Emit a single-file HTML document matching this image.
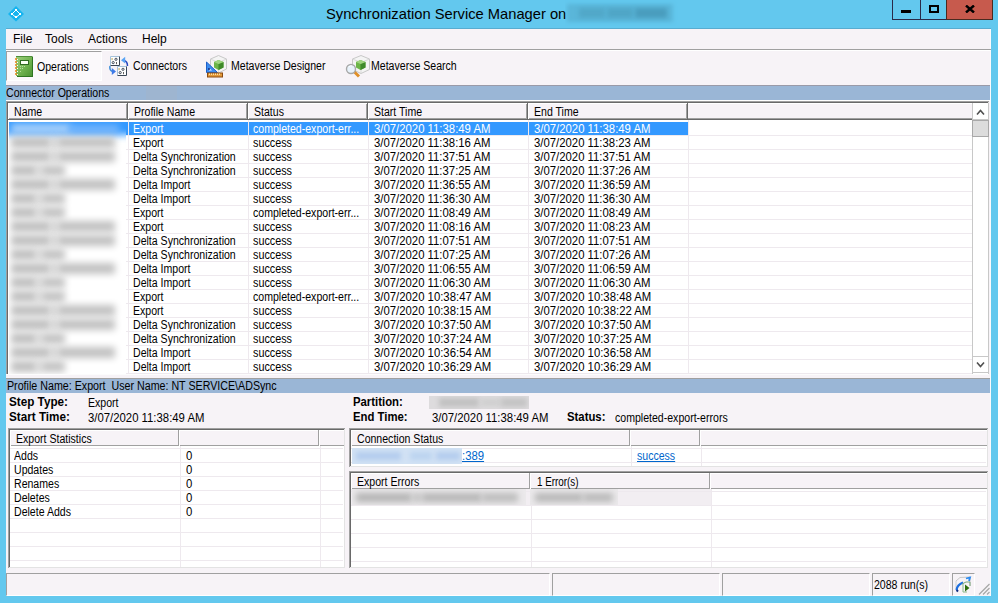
<!DOCTYPE html>
<html><head><meta charset="utf-8">
<style>
*{margin:0;padding:0;box-sizing:border-box}
html,body{width:998px;height:603px;overflow:hidden;background:#63c8ee;font-family:"Liberation Sans",sans-serif;font-size:11px;color:#000}
.a{position:absolute}
.t{position:absolute;white-space:pre;font-size:12px;line-height:14px;transform:scaleX(.88);transform-origin:0 0}
.d{position:absolute;white-space:pre;font-size:12px;line-height:14px;transform:scaleX(.945);transform-origin:0 0}
.w{color:#fff}
.b{font-weight:bold;transform:scaleX(.945)}
.blur{position:absolute;background:#b0b0b0;filter:blur(2.5px);border-radius:3px}
</style></head><body>

<svg class="a" style="left:7px;top:5px" width="18" height="18" viewBox="0 0 18 18">
<path d="M9 1 L17 9 L9 16.5 L1 9 Z" fill="#16b4ef"/>
<path d="M9 5 L13 9 L9 12.5 L5 9 Z" fill="none" stroke="#fff" stroke-width="1"/>
<rect x="8" y="4" width="2" height="2" fill="#fff"/><rect x="4" y="8" width="2" height="2" fill="#fff"/>
<rect x="12" y="8" width="2" height="2" fill="#fff"/><rect x="8" y="11" width="2" height="2" fill="#fff"/>
</svg>
<div class="t" style="left:326px;top:5px;font-size:15px;line-height:18px;color:#000;transform:scaleX(.98)">Synchronization Service Manager on</div>
<div class="a" style="left:892px;top:0px;width:29px;height:20px;background:#63c8ee;border:1px solid #2a2a48;border-top:0"></div>
<div class="a" style="left:920px;top:0px;width:27px;height:20px;background:#63c8ee;border:1px solid #2a2a48;border-top:0"></div>
<div class="a" style="left:946px;top:0px;width:47px;height:20px;background:#c75a4d;border:1px solid #4b2a20;border-top:0"></div>
<div class="a" style="left:901px;top:10px;width:10px;height:3px;background:#000;"></div>
<div class="a" style="left:929px;top:5px;width:10px;height:8px;background:transparent;border:2px solid #000"></div>
<svg class="a" style="left:965px;top:5px" width="10" height="8" viewBox="0 0 10 8"><path d="M1 0.5 L9 7.5 M9 0.5 L1 7.5" stroke="#000" stroke-width="2.4"/></svg>
<div class="a" style="left:6px;top:28px;width:985px;height:1px;background:#58acd0;"></div>
<div class="a" style="left:6px;top:29px;width:985px;height:567px;background:#f7f3f7;"></div>
<div class="a" style="left:990px;top:29px;width:1px;height:567px;background:#fdfbfd;"></div>
<div class="t" style="left:13px;top:32px;transform:none">File</div>
<div class="t" style="left:45px;top:32px;transform:none">Tools</div>
<div class="t" style="left:88px;top:32px;transform:none">Actions</div>
<div class="t" style="left:142px;top:32px;transform:none">Help</div>
<div class="a" style="left:6px;top:49px;width:985px;height:1px;background:#a0a0a0;"></div>
<div class="a" style="left:6px;top:50px;width:985px;height:1px;background:#fff;"></div>
<div class="a" style="left:6px;top:51px;width:96px;height:30px;background:#fbf9fb;border-top:1px solid #a0a0a0;border-left:1px solid #a0a0a0;border-right:1px solid #fff;border-bottom:1px solid #fff"></div>
<div class="t" style="left:37px;top:60px;">Operations</div>
<div class="t" style="left:133px;top:59px;">Connectors</div>
<div class="t" style="left:231px;top:59px;">Metaverse Designer</div>
<div class="t" style="left:371px;top:59px;">Metaverse Search</div>
<svg class="a" style="left:13px;top:54px" width="22" height="24" viewBox="0 0 22 24">
<defs><linearGradient id="nbg" x1="0" y1="0" x2="1" y2="1"><stop offset="0" stop-color="#9fd07e"/><stop offset="0.6" stop-color="#6cb04c"/><stop offset="1" stop-color="#4d9434"/></linearGradient></defs>
<rect x="4" y="2.5" width="16" height="20.5" fill="#2f7522"/>
<rect x="3" y="2" width="16" height="20" fill="url(#nbg)"/>
<rect x="3" y="2" width="16" height="1" fill="#4f8f3a"/>
<rect x="7.5" y="6.5" width="8" height="4" fill="#fbfff4" stroke="#2e6a20" stroke-width="1"/>
<g fill="#b5e09a"><rect x="7" y="12" width="1" height="1"/><rect x="9" y="12" width="1" height="1"/><rect x="11" y="12" width="1" height="1"/><rect x="7" y="14" width="1" height="1"/><rect x="9" y="14" width="1" height="1"/><rect x="7" y="17" width="1" height="1"/></g>
<g fill="#e58b22"><circle cx="3" cy="5" r="1.1"/><circle cx="3" cy="8" r="1.1"/><circle cx="3" cy="11" r="1.1"/><circle cx="3" cy="14" r="1.1"/><circle cx="3" cy="17" r="1.1"/><circle cx="3" cy="20" r="1.1"/></g>
<g fill="#fff"><rect x="4" y="5" width="1" height="1"/><rect x="4" y="8" width="1" height="1"/><rect x="4" y="11" width="1" height="1"/><rect x="4" y="14" width="1" height="1"/><rect x="4" y="17" width="1" height="1"/><rect x="4" y="20" width="1" height="1"/></g>
</svg>
<svg class="a" style="left:107px;top:54px" width="24" height="24" viewBox="0 0 24 24">
<rect x="3" y="2" width="10" height="10" fill="#fff"/>
<path d="M3.5 11.5 V2.5 H12.5" fill="none" stroke="#a6c2da" stroke-width="1"/>
<path d="M12.5 2.5 V11.5 H3.5" fill="none" stroke="#3a4656" stroke-width="1"/>
<g fill="none" stroke="#1e2838" stroke-width="0.8"><circle cx="9" cy="5.3" r="1.1"/><circle cx="6.2" cy="8.6" r="1.1"/></g>
<rect x="4.6" y="4" width="0.9" height="2.2" fill="#b89a40"/><rect x="9.1" y="8" width="0.9" height="2.2" fill="#505050"/>
<rect x="10" y="12" width="10" height="10" fill="#fff"/>
<path d="M10.5 21.5 V12.5 H19.5" fill="none" stroke="#a6c2da" stroke-width="1"/>
<path d="M19.5 12.5 V21.5 H10.5" fill="none" stroke="#3a4656" stroke-width="1"/>
<g fill="none" stroke="#1e2838" stroke-width="0.8"><circle cx="16" cy="15.3" r="1.1"/><circle cx="13.2" cy="18.6" r="1.1"/></g>
<rect x="11.6" y="14" width="0.9" height="2.2" fill="#b89a40"/><rect x="16.1" y="18" width="0.9" height="2.2" fill="#505050"/>
<path d="M17 6.5 C19.5 7 20.5 9 20.5 12" fill="none" stroke="#2848c0" stroke-width="1.5"/>
<path d="M14 6.2 L18.2 2.8 L18.2 9.6 Z" fill="#5aa4f4"/>
<path d="M3 12 C2.5 14.5 3.5 17 6 17.5" fill="none" stroke="#3a8ad8" stroke-width="1.5"/>
<path d="M9 17.6 L4.8 14 L4.8 21 Z" fill="#3f7ae8"/>
</svg>
<svg class="a" style="left:204px;top:53px" width="26" height="26" viewBox="0 0 26 26">
<path d="M14.5 2.5 L22.5 6 L22.5 16 L14.5 20 L6.5 16 L6.5 6 Z" fill="#f4f4f4" stroke="#c8c8c8" stroke-width="1"/>
<path d="M6.5 6 L14.5 9.5 L22.5 6 M14.5 9.5 V20" fill="none" stroke="#d4d4d4" stroke-width="0.8"/>
<path d="M14.5 7 L19.5 9 L19.5 14.5 L14.5 17 L10 14.5 L10 9 Z" fill="#6cb548"/>
<path d="M14.5 11 L19.5 9 L19.5 14.5 L14.5 17 Z" fill="#3f8a2a"/>
<path d="M10 9 L14.5 7 L19.5 9 L14.5 11 Z" fill="#9fd480"/>
<path d="M2.5 9 L13.5 19.5 L2.5 19.5 Z" fill="#3c8cf0" stroke="#1d5fc8" stroke-width="1"/>
<path d="M5 15 L8 17.5 L5 17.5 Z" fill="#e8f0ff"/>
<circle cx="5" cy="16" r="1" fill="#0a2a80"/>
<rect x="3.5" y="20" width="15" height="4" fill="#e39a3a" stroke="#8a4a10" stroke-width="1"/>
<path d="M5.5 20.5 V22 M7.5 20.5 V22 M9.5 20.5 V22 M11.5 20.5 V22 M13.5 20.5 V22 M15.5 20.5 V22" stroke="#fde0a8" stroke-width="1"/>
</svg>
<svg class="a" style="left:344px;top:53px" width="28" height="26" viewBox="0 0 28 26">
<path d="M17 2.5 L25.5 6 L25.5 16.5 L17 20.5 L8.5 16.5 L8.5 6 Z" fill="#f4f4f4" stroke="#c8c8c8" stroke-width="1"/>
<path d="M8.5 6 L17 9.5 L25.5 6 M17 9.5 V20.5" fill="none" stroke="#d4d4d4" stroke-width="0.8"/>
<path d="M16.5 7 L21.5 9 L21.5 14.5 L16.5 17 L12 14.5 L12 9 Z" fill="#6cb548"/>
<path d="M16.5 11 L21.5 9 L21.5 14.5 L16.5 17 Z" fill="#3f8a2a"/>
<path d="M12 9 L16.5 7 L21.5 9 L16.5 11 Z" fill="#9fd480"/>
<path d="M10 18.5 L15 23.5" stroke="#e0902a" stroke-width="3"/>
<circle cx="7" cy="16" r="4.5" fill="#e8f2fb" stroke="#a8a8a8" stroke-width="1.4"/>
<path d="M5 14 A2.5 2.5 0 0 1 8 13" fill="none" stroke="#fff" stroke-width="1"/>
</svg>
<div class="a" style="left:6px;top:85px;width:984px;height:1px;background:#9a9aa8;"></div>
<div class="a" style="left:6px;top:86px;width:984px;height:14px;background:#9ab6d6;"></div>
<div class="a" style="left:6px;top:100px;width:984px;height:1px;background:#fff;"></div>
<div class="a" style="left:146px;top:86px;width:31px;height:14px;background:#9eb5d0;"></div>
<div class="t" style="left:6px;top:86px;">Connector Operations</div>
<div class="a" style="left:6px;top:101px;width:983px;height:273px;background:#fff;"></div>
<div class="a" style="left:6px;top:374px;width:983px;height:1px;background:#fcfcfc;"></div>
<div class="a" style="left:6px;top:101px;width:983px;height:1px;background:#a0a0a0;"></div>
<div class="a" style="left:6px;top:101px;width:1px;height:273px;background:#a0a0a0;"></div>
<div class="a" style="left:7px;top:102px;width:981px;height:1px;background:#696969;"></div>
<div class="a" style="left:7px;top:102px;width:1px;height:272px;background:#696969;"></div>
<div class="a" style="left:988px;top:102px;width:1px;height:271px;background:#e3e3e3;"></div>
<div class="a" style="left:8px;top:103px;width:120px;height:17px;background:#f7f3f7;"></div>
<div class="a" style="left:8px;top:103px;width:120px;height:1px;background:#fff;"></div>
<div class="a" style="left:8px;top:103px;width:1px;height:17px;background:#fff;"></div>
<div class="a" style="left:126px;top:104px;width:1px;height:16px;background:#a0a0a0;"></div>
<div class="a" style="left:127px;top:103px;width:1px;height:17px;background:#696969;"></div>
<div class="a" style="left:9px;top:118px;width:118px;height:1px;background:#a0a0a0;"></div>
<div class="a" style="left:8px;top:119px;width:120px;height:1px;background:#696969;"></div>
<div class="t" style="left:14px;top:105px;">Name</div>
<div class="a" style="left:128px;top:103px;width:120px;height:17px;background:#f7f3f7;"></div>
<div class="a" style="left:128px;top:103px;width:120px;height:1px;background:#fff;"></div>
<div class="a" style="left:128px;top:103px;width:1px;height:17px;background:#fff;"></div>
<div class="a" style="left:246px;top:104px;width:1px;height:16px;background:#a0a0a0;"></div>
<div class="a" style="left:247px;top:103px;width:1px;height:17px;background:#696969;"></div>
<div class="a" style="left:129px;top:118px;width:118px;height:1px;background:#a0a0a0;"></div>
<div class="a" style="left:128px;top:119px;width:120px;height:1px;background:#696969;"></div>
<div class="t" style="left:134px;top:105px;">Profile Name</div>
<div class="a" style="left:248px;top:103px;width:120px;height:17px;background:#f7f3f7;"></div>
<div class="a" style="left:248px;top:103px;width:120px;height:1px;background:#fff;"></div>
<div class="a" style="left:248px;top:103px;width:1px;height:17px;background:#fff;"></div>
<div class="a" style="left:366px;top:104px;width:1px;height:16px;background:#a0a0a0;"></div>
<div class="a" style="left:367px;top:103px;width:1px;height:17px;background:#696969;"></div>
<div class="a" style="left:249px;top:118px;width:118px;height:1px;background:#a0a0a0;"></div>
<div class="a" style="left:248px;top:119px;width:120px;height:1px;background:#696969;"></div>
<div class="t" style="left:254px;top:105px;">Status</div>
<div class="a" style="left:368px;top:103px;width:160px;height:17px;background:#f7f3f7;"></div>
<div class="a" style="left:368px;top:103px;width:160px;height:1px;background:#fff;"></div>
<div class="a" style="left:368px;top:103px;width:1px;height:17px;background:#fff;"></div>
<div class="a" style="left:526px;top:104px;width:1px;height:16px;background:#a0a0a0;"></div>
<div class="a" style="left:527px;top:103px;width:1px;height:17px;background:#696969;"></div>
<div class="a" style="left:369px;top:118px;width:158px;height:1px;background:#a0a0a0;"></div>
<div class="a" style="left:368px;top:119px;width:160px;height:1px;background:#696969;"></div>
<div class="t" style="left:374px;top:105px;">Start Time</div>
<div class="a" style="left:528px;top:103px;width:160px;height:17px;background:#f7f3f7;"></div>
<div class="a" style="left:528px;top:103px;width:160px;height:1px;background:#fff;"></div>
<div class="a" style="left:528px;top:103px;width:1px;height:17px;background:#fff;"></div>
<div class="a" style="left:686px;top:104px;width:1px;height:16px;background:#a0a0a0;"></div>
<div class="a" style="left:687px;top:103px;width:1px;height:17px;background:#696969;"></div>
<div class="a" style="left:529px;top:118px;width:158px;height:1px;background:#a0a0a0;"></div>
<div class="a" style="left:528px;top:119px;width:160px;height:1px;background:#696969;"></div>
<div class="t" style="left:534px;top:105px;">End Time</div>
<div class="a" style="left:688px;top:103px;width:284px;height:17px;background:#f7f3f7;"></div>
<div class="a" style="left:688px;top:103px;width:284px;height:1px;background:#fff;"></div>
<div class="a" style="left:688px;top:118px;width:284px;height:1px;background:#a0a0a0;"></div>
<div class="a" style="left:688px;top:119px;width:284px;height:1px;background:#696969;"></div>
<div class="a" style="left:9px;top:122px;width:119px;height:13px;background:#3399ff;"></div>
<div class="a" style="left:129px;top:122px;width:119px;height:13px;background:#3399ff;"></div>
<div class="a" style="left:249px;top:122px;width:119px;height:13px;background:#3399ff;"></div>
<div class="a" style="left:369px;top:122px;width:159px;height:13px;background:#3399ff;"></div>
<div class="a" style="left:529px;top:122px;width:159px;height:13px;background:#3399ff;"></div>
<div class="a" style="left:9px;top:135px;width:963px;height:1px;background:#eee9ee;"></div>
<div class="t w" style="left:133px;top:122px;">Export</div>
<div class="t w" style="left:253px;top:122px;">completed-export-err...</div>
<div class="d w" style="left:374px;top:122px;">3/07/2020 11:38:49 AM</div>
<div class="d w" style="left:534px;top:122px;">3/07/2020 11:38:49 AM</div>
<div class="a" style="left:9px;top:149px;width:963px;height:1px;background:#eee9ee;"></div>
<div class="t" style="left:133px;top:136px;">Export</div>
<div class="t" style="left:253px;top:136px;transform:scaleX(.9)">success</div>
<div class="d" style="left:374px;top:136px;">3/07/2020 11:38:16 AM</div>
<div class="d" style="left:534px;top:136px;">3/07/2020 11:38:23 AM</div>
<div class="a" style="left:9px;top:163px;width:963px;height:1px;background:#eee9ee;"></div>
<div class="t" style="left:133px;top:150px;">Delta Synchronization</div>
<div class="t" style="left:253px;top:150px;transform:scaleX(.9)">success</div>
<div class="d" style="left:374px;top:150px;">3/07/2020 11:37:51 AM</div>
<div class="d" style="left:534px;top:150px;">3/07/2020 11:37:51 AM</div>
<div class="a" style="left:9px;top:177px;width:963px;height:1px;background:#eee9ee;"></div>
<div class="t" style="left:133px;top:164px;">Delta Synchronization</div>
<div class="t" style="left:253px;top:164px;transform:scaleX(.9)">success</div>
<div class="d" style="left:374px;top:164px;">3/07/2020 11:37:25 AM</div>
<div class="d" style="left:534px;top:164px;">3/07/2020 11:37:26 AM</div>
<div class="a" style="left:9px;top:191px;width:963px;height:1px;background:#eee9ee;"></div>
<div class="t" style="left:133px;top:178px;">Delta Import</div>
<div class="t" style="left:253px;top:178px;transform:scaleX(.9)">success</div>
<div class="d" style="left:374px;top:178px;">3/07/2020 11:36:55 AM</div>
<div class="d" style="left:534px;top:178px;">3/07/2020 11:36:59 AM</div>
<div class="a" style="left:9px;top:205px;width:963px;height:1px;background:#eee9ee;"></div>
<div class="t" style="left:133px;top:192px;">Delta Import</div>
<div class="t" style="left:253px;top:192px;transform:scaleX(.9)">success</div>
<div class="d" style="left:374px;top:192px;">3/07/2020 11:36:30 AM</div>
<div class="d" style="left:534px;top:192px;">3/07/2020 11:36:30 AM</div>
<div class="a" style="left:9px;top:219px;width:963px;height:1px;background:#eee9ee;"></div>
<div class="t" style="left:133px;top:206px;">Export</div>
<div class="t" style="left:253px;top:206px;">completed-export-err...</div>
<div class="d" style="left:374px;top:206px;">3/07/2020 11:08:49 AM</div>
<div class="d" style="left:534px;top:206px;">3/07/2020 11:08:49 AM</div>
<div class="a" style="left:9px;top:233px;width:963px;height:1px;background:#eee9ee;"></div>
<div class="t" style="left:133px;top:220px;">Export</div>
<div class="t" style="left:253px;top:220px;transform:scaleX(.9)">success</div>
<div class="d" style="left:374px;top:220px;">3/07/2020 11:08:16 AM</div>
<div class="d" style="left:534px;top:220px;">3/07/2020 11:08:23 AM</div>
<div class="a" style="left:9px;top:247px;width:963px;height:1px;background:#eee9ee;"></div>
<div class="t" style="left:133px;top:234px;">Delta Synchronization</div>
<div class="t" style="left:253px;top:234px;transform:scaleX(.9)">success</div>
<div class="d" style="left:374px;top:234px;">3/07/2020 11:07:51 AM</div>
<div class="d" style="left:534px;top:234px;">3/07/2020 11:07:51 AM</div>
<div class="a" style="left:9px;top:261px;width:963px;height:1px;background:#eee9ee;"></div>
<div class="t" style="left:133px;top:248px;">Delta Synchronization</div>
<div class="t" style="left:253px;top:248px;transform:scaleX(.9)">success</div>
<div class="d" style="left:374px;top:248px;">3/07/2020 11:07:25 AM</div>
<div class="d" style="left:534px;top:248px;">3/07/2020 11:07:26 AM</div>
<div class="a" style="left:9px;top:275px;width:963px;height:1px;background:#eee9ee;"></div>
<div class="t" style="left:133px;top:262px;">Delta Import</div>
<div class="t" style="left:253px;top:262px;transform:scaleX(.9)">success</div>
<div class="d" style="left:374px;top:262px;">3/07/2020 11:06:55 AM</div>
<div class="d" style="left:534px;top:262px;">3/07/2020 11:06:59 AM</div>
<div class="a" style="left:9px;top:289px;width:963px;height:1px;background:#eee9ee;"></div>
<div class="t" style="left:133px;top:276px;">Delta Import</div>
<div class="t" style="left:253px;top:276px;transform:scaleX(.9)">success</div>
<div class="d" style="left:374px;top:276px;">3/07/2020 11:06:30 AM</div>
<div class="d" style="left:534px;top:276px;">3/07/2020 11:06:30 AM</div>
<div class="a" style="left:9px;top:303px;width:963px;height:1px;background:#eee9ee;"></div>
<div class="t" style="left:133px;top:290px;">Export</div>
<div class="t" style="left:253px;top:290px;">completed-export-err...</div>
<div class="d" style="left:374px;top:290px;">3/07/2020 10:38:47 AM</div>
<div class="d" style="left:534px;top:290px;">3/07/2020 10:38:48 AM</div>
<div class="a" style="left:9px;top:317px;width:963px;height:1px;background:#eee9ee;"></div>
<div class="t" style="left:133px;top:304px;">Export</div>
<div class="t" style="left:253px;top:304px;transform:scaleX(.9)">success</div>
<div class="d" style="left:374px;top:304px;">3/07/2020 10:38:15 AM</div>
<div class="d" style="left:534px;top:304px;">3/07/2020 10:38:22 AM</div>
<div class="a" style="left:9px;top:331px;width:963px;height:1px;background:#eee9ee;"></div>
<div class="t" style="left:133px;top:318px;">Delta Synchronization</div>
<div class="t" style="left:253px;top:318px;transform:scaleX(.9)">success</div>
<div class="d" style="left:374px;top:318px;">3/07/2020 10:37:50 AM</div>
<div class="d" style="left:534px;top:318px;">3/07/2020 10:37:50 AM</div>
<div class="a" style="left:9px;top:345px;width:963px;height:1px;background:#eee9ee;"></div>
<div class="t" style="left:133px;top:332px;">Delta Synchronization</div>
<div class="t" style="left:253px;top:332px;transform:scaleX(.9)">success</div>
<div class="d" style="left:374px;top:332px;">3/07/2020 10:37:24 AM</div>
<div class="d" style="left:534px;top:332px;">3/07/2020 10:37:25 AM</div>
<div class="a" style="left:9px;top:359px;width:963px;height:1px;background:#eee9ee;"></div>
<div class="t" style="left:133px;top:346px;">Delta Import</div>
<div class="t" style="left:253px;top:346px;transform:scaleX(.9)">success</div>
<div class="d" style="left:374px;top:346px;">3/07/2020 10:36:54 AM</div>
<div class="d" style="left:534px;top:346px;">3/07/2020 10:36:58 AM</div>
<div class="a" style="left:9px;top:373px;width:963px;height:1px;background:#eee9ee;"></div>
<div class="t" style="left:133px;top:360px;">Delta Import</div>
<div class="t" style="left:253px;top:360px;transform:scaleX(.9)">success</div>
<div class="d" style="left:374px;top:360px;">3/07/2020 10:36:29 AM</div>
<div class="d" style="left:534px;top:360px;">3/07/2020 10:36:29 AM</div>
<div class="a" style="left:128px;top:120px;width:1px;height:253px;background:#eee9ee;"></div>
<div class="a" style="left:248px;top:120px;width:1px;height:253px;background:#eee9ee;"></div>
<div class="a" style="left:368px;top:120px;width:1px;height:253px;background:#eee9ee;"></div>
<div class="a" style="left:528px;top:120px;width:1px;height:253px;background:#eee9ee;"></div>
<div class="a" style="left:688px;top:120px;width:1px;height:253px;background:#eee9ee;"></div>
<div class="a" style="left:972px;top:103px;width:17px;height:271px;background:#fff;border-left:1px solid #c8c8c8;border-right:1px solid #c8c8c8"></div>
<div class="a" style="left:972px;top:119px;width:17px;height:1px;background:#c8c8c8;"></div>
<svg class="a" style="left:976px;top:109px" width="9" height="7" viewBox="0 0 9 7"><path d="M1 5.5 L4.5 1.5 L8 5.5" fill="none" stroke="#505050" stroke-width="1.6"/></svg>
<div class="a" style="left:972px;top:120px;width:17px;height:17px;background:#dcdcdc;border:1px solid #a8a8a8"></div>
<div class="a" style="left:972px;top:356px;width:17px;height:17px;background:#fff;border:1px solid #c8c8c8"></div>
<svg class="a" style="left:976px;top:361px" width="9" height="7" viewBox="0 0 9 7"><path d="M1 1.5 L4.5 5.5 L8 1.5" fill="none" stroke="#505050" stroke-width="1.6"/></svg>
<div class="a" style="left:6px;top:378px;width:984px;height:1px;background:#a0a0a0;"></div>
<div class="a" style="left:6px;top:379px;width:984px;height:14px;background:#9ab6d6;"></div>
<div class="t" style="left:7px;top:379px;transform:scaleX(.89)">Profile Name: Export  User Name: NT SERVICE\ADSync</div>
<div class="t b" style="left:9px;top:395px;transform:scaleX(.975)">Step Type:</div>
<div class="t" style="left:88px;top:396px;">Export</div>
<div class="t b" style="left:9px;top:410px;transform:scaleX(.975)">Start Time:</div>
<div class="d" style="left:88px;top:411px;">3/07/2020 11:38:49 AM</div>
<div class="t b" style="left:353px;top:395px;">Partition:</div>
<div class="t b" style="left:353px;top:410px;">End Time:</div>
<div class="d" style="left:432px;top:411px;">3/07/2020 11:38:49 AM</div>
<div class="t b" style="left:567px;top:410px;">Status:</div>
<div class="t" style="left:615px;top:411px;">completed-export-errors</div>
<div class="a" style="left:8px;top:428px;width:337px;height:140px;background:#fff;"></div>
<div class="a" style="left:8px;top:428px;width:337px;height:1px;background:#a0a0a0;"></div>
<div class="a" style="left:8px;top:428px;width:1px;height:140px;background:#a0a0a0;"></div>
<div class="a" style="left:9px;top:429px;width:335px;height:1px;background:#696969;"></div>
<div class="a" style="left:9px;top:429px;width:1px;height:138px;background:#696969;"></div>
<div class="a" style="left:344px;top:429px;width:1px;height:139px;background:#e3e3e3;"></div>
<div class="a" style="left:9px;top:567px;width:336px;height:1px;background:#e3e3e3;"></div>
<div class="a" style="left:10px;top:430px;width:334px;height:16px;background:#f7f3f7;"></div>
<div class="a" style="left:10px;top:430px;width:334px;height:1px;background:#fff;"></div>
<div class="a" style="left:10px;top:445px;width:334px;height:1px;background:#a0a0a0;"></div>
<div class="a" style="left:178px;top:430px;width:1px;height:16px;background:#a0a0a0;"></div>
<div class="a" style="left:179px;top:430px;width:1px;height:16px;background:#fff;"></div>
<div class="a" style="left:318px;top:430px;width:1px;height:16px;background:#a0a0a0;"></div>
<div class="a" style="left:319px;top:430px;width:1px;height:16px;background:#fff;"></div>
<div class="a" style="left:10px;top:430px;width:1px;height:16px;background:#fff;"></div>
<div class="t" style="left:16px;top:432px;">Export Statistics</div>
<div class="t" style="left:14px;top:449px;">Adds</div>
<div class="d" style="left:186px;top:449px;">0</div>
<div class="t" style="left:14px;top:463px;">Updates</div>
<div class="d" style="left:186px;top:463px;">0</div>
<div class="t" style="left:14px;top:477px;">Renames</div>
<div class="d" style="left:186px;top:477px;">0</div>
<div class="t" style="left:14px;top:491px;">Deletes</div>
<div class="d" style="left:186px;top:491px;">0</div>
<div class="t" style="left:14px;top:505px;">Delete Adds</div>
<div class="d" style="left:186px;top:505px;">0</div>
<div class="a" style="left:10px;top:448px;width:333px;height:1px;background:#eee9ee;"></div>
<div class="a" style="left:10px;top:462px;width:333px;height:1px;background:#eee9ee;"></div>
<div class="a" style="left:10px;top:476px;width:333px;height:1px;background:#eee9ee;"></div>
<div class="a" style="left:10px;top:490px;width:333px;height:1px;background:#eee9ee;"></div>
<div class="a" style="left:10px;top:504px;width:333px;height:1px;background:#eee9ee;"></div>
<div class="a" style="left:10px;top:518px;width:333px;height:1px;background:#eee9ee;"></div>
<div class="a" style="left:10px;top:532px;width:333px;height:1px;background:#eee9ee;"></div>
<div class="a" style="left:10px;top:546px;width:333px;height:1px;background:#eee9ee;"></div>
<div class="a" style="left:10px;top:560px;width:333px;height:1px;background:#eee9ee;"></div>
<div class="a" style="left:180px;top:446px;width:1px;height:121px;background:#eee9ee;"></div>
<div class="a" style="left:320px;top:446px;width:1px;height:121px;background:#eee9ee;"></div>
<div class="a" style="left:349px;top:428px;width:639px;height:39px;background:#fff;"></div>
<div class="a" style="left:349px;top:428px;width:639px;height:1px;background:#a0a0a0;"></div>
<div class="a" style="left:349px;top:428px;width:1px;height:39px;background:#a0a0a0;"></div>
<div class="a" style="left:350px;top:429px;width:637px;height:1px;background:#696969;"></div>
<div class="a" style="left:350px;top:429px;width:1px;height:37px;background:#696969;"></div>
<div class="a" style="left:987px;top:429px;width:1px;height:38px;background:#e3e3e3;"></div>
<div class="a" style="left:350px;top:466px;width:638px;height:1px;background:#e3e3e3;"></div>
<div class="a" style="left:351px;top:430px;width:636px;height:16px;background:#f7f3f7;"></div>
<div class="a" style="left:351px;top:430px;width:636px;height:1px;background:#fff;"></div>
<div class="a" style="left:351px;top:445px;width:636px;height:1px;background:#a0a0a0;"></div>
<div class="a" style="left:629px;top:430px;width:1px;height:16px;background:#a0a0a0;"></div>
<div class="a" style="left:630px;top:430px;width:1px;height:16px;background:#fff;"></div>
<div class="a" style="left:699px;top:430px;width:1px;height:16px;background:#a0a0a0;"></div>
<div class="a" style="left:700px;top:430px;width:1px;height:16px;background:#fff;"></div>
<div class="a" style="left:351px;top:430px;width:1px;height:16px;background:#fff;"></div>
<div class="t" style="left:357px;top:432px;">Connection Status</div>
<div class="d" style="left:462px;top:449px;color:#0066cc;text-decoration:underline">:389</div>
<div class="t" style="left:637px;top:449px;color:#0066cc;text-decoration:underline">success</div>
<div class="a" style="left:351px;top:448px;width:635px;height:1px;background:#eee9ee;"></div>
<div class="a" style="left:351px;top:462px;width:635px;height:1px;background:#eee9ee;"></div>
<div class="a" style="left:631px;top:446px;width:1px;height:20px;background:#eee9ee;"></div>
<div class="a" style="left:701px;top:446px;width:1px;height:20px;background:#eee9ee;"></div>
<div class="a" style="left:349px;top:471px;width:639px;height:97px;background:#fff;"></div>
<div class="a" style="left:349px;top:471px;width:639px;height:1px;background:#a0a0a0;"></div>
<div class="a" style="left:349px;top:471px;width:1px;height:97px;background:#a0a0a0;"></div>
<div class="a" style="left:350px;top:472px;width:637px;height:1px;background:#696969;"></div>
<div class="a" style="left:350px;top:472px;width:1px;height:95px;background:#696969;"></div>
<div class="a" style="left:987px;top:472px;width:1px;height:96px;background:#e3e3e3;"></div>
<div class="a" style="left:350px;top:567px;width:638px;height:1px;background:#e3e3e3;"></div>
<div class="a" style="left:351px;top:473px;width:636px;height:16px;background:#f7f3f7;"></div>
<div class="a" style="left:351px;top:473px;width:636px;height:1px;background:#fff;"></div>
<div class="a" style="left:351px;top:488px;width:636px;height:1px;background:#a0a0a0;"></div>
<div class="a" style="left:529px;top:473px;width:1px;height:16px;background:#a0a0a0;"></div>
<div class="a" style="left:530px;top:473px;width:1px;height:16px;background:#fff;"></div>
<div class="a" style="left:709px;top:473px;width:1px;height:16px;background:#a0a0a0;"></div>
<div class="a" style="left:710px;top:473px;width:1px;height:16px;background:#fff;"></div>
<div class="a" style="left:351px;top:473px;width:1px;height:16px;background:#fff;"></div>
<div class="t" style="left:357px;top:475px;">Export Errors</div>
<div class="t" style="left:537px;top:475px;transform:scaleX(.82)">1 Error(s)</div>
<div class="a" style="left:351px;top:489px;width:360px;height:16px;background:#f2eef2;"></div>
<div class="a" style="left:351px;top:491px;width:635px;height:1px;background:#eee9ee;"></div>
<div class="a" style="left:351px;top:505px;width:635px;height:1px;background:#eee9ee;"></div>
<div class="a" style="left:351px;top:519px;width:635px;height:1px;background:#eee9ee;"></div>
<div class="a" style="left:351px;top:533px;width:635px;height:1px;background:#eee9ee;"></div>
<div class="a" style="left:351px;top:547px;width:635px;height:1px;background:#eee9ee;"></div>
<div class="a" style="left:351px;top:561px;width:635px;height:1px;background:#eee9ee;"></div>
<div class="a" style="left:531px;top:489px;width:1px;height:78px;background:#eee9ee;"></div>
<div class="a" style="left:711px;top:489px;width:1px;height:78px;background:#eee9ee;"></div>
<div class="a" style="left:6px;top:573px;width:544px;height:23px;background:#f7f3f7;border-left:1px solid #a0a0a0;border-top:1px solid #a0a0a0;border-right:1px solid #fff;border-bottom:1px solid #fff"></div>
<div class="a" style="left:552px;top:573px;width:168px;height:23px;background:#f7f3f7;border-left:1px solid #a0a0a0;border-top:1px solid #a0a0a0;border-right:1px solid #fff;border-bottom:1px solid #fff"></div>
<div class="a" style="left:722px;top:573px;width:148px;height:23px;background:#f7f3f7;border-left:1px solid #a0a0a0;border-top:1px solid #a0a0a0;border-right:1px solid #fff;border-bottom:1px solid #fff"></div>
<div class="a" style="left:872px;top:573px;width:78px;height:23px;background:#f7f3f7;border-left:1px solid #a0a0a0;border-top:1px solid #a0a0a0;border-right:1px solid #fff;border-bottom:1px solid #fff"></div>
<div class="a" style="left:952px;top:573px;width:23px;height:23px;background:#f7f3f7;border-left:1px solid #a0a0a0;border-top:1px solid #a0a0a0;border-right:1px solid #fff;border-bottom:1px solid #fff"></div>
<div class="t" style="left:874px;top:578px;">2088 run(s)</div>
<svg class="a" style="left:953px;top:574px" width="21" height="21" viewBox="0 0 21 21">
<path d="M3 7 L7 3.5 L17 3 L17 12" fill="none" stroke="#c8c8c8" stroke-width="1"/>
<path d="M3 7 V15" fill="none" stroke="#d0d0d0" stroke-width="1"/>
<path d="M17 12 V8 L13 8 L9 10" fill="none" stroke="#7aa87a" stroke-width="1"/>
<path d="M3.5 16 C4 12 6 10 10 8.5" fill="none" stroke="#1e6fe0" stroke-width="2.2"/>
<path d="M3.5 16 L5 17.5" stroke="#0a2a80" stroke-width="2"/>
<path d="M13 4.5 L17 3.5 L16 7" fill="none" stroke="#2a8af0" stroke-width="1.8"/>
<path d="M10 9 V18 H14" fill="none" stroke="#8ab88a" stroke-width="1"/>
<path d="M12 10.5 L16.5 14 L12 17.5 Z" fill="#2f6f10"/>
</svg>
<svg class="a" style="left:978px;top:583px" width="12" height="12" viewBox="0 0 12 12"><path d="M11.5 1 L1 11.5 M11.5 5 L5 11.5 M11.5 9 L9 11.5" stroke="#a8a8a8" stroke-width="1.3"/></svg>
<div class="a" style="left:565px;top:0px;width:113px;height:26px;overflow:hidden;background:transparent"><div style="position:absolute;left:-1998px;top:4px;width:106px;height:18px;background:#5ab6d9;box-shadow:2000px 0 4px 0 #5ab6d9"></div><div style="position:absolute;left:-1986px;top:8px;width:26px;height:10px;background:#52a8c9;box-shadow:2000px 0 4px 0 #52a8c9"></div><div style="position:absolute;left:-1958px;top:8px;width:26px;height:10px;background:#50a6c7;box-shadow:2000px 0 4px 0 #50a6c7"></div><div style="position:absolute;left:-1930px;top:8px;width:32px;height:10px;background:#4a9dbe;box-shadow:2000px 0 4px 0 #4a9dbe"></div></div>
<div class="a" style="left:9px;top:122px;width:117px;height:252px;overflow:hidden;background:#fff"><div style="position:absolute;left:-2010px;top:-10px;width:140px;height:23px;background:#3399ff;box-shadow:2000px 0 7.0px 0 #3399ff"></div><div style="position:absolute;left:-1998px;top:2px;width:60px;height:9px;background:#b0d4fa;box-shadow:2000px 0 7.0px 0 #b0d4fa"></div><div style="position:absolute;left:-1940px;top:3px;width:50px;height:8px;background:#7ab8fc;box-shadow:2000px 0 7.0px 0 #7ab8fc"></div><div style="position:absolute;left:-1998px;top:15px;width:40px;height:11px;background:#c0c0c0;box-shadow:2000px 0 7.0px 0 #c0c0c0"></div><div style="position:absolute;left:-1958px;top:15px;width:6px;height:11px;background:#cacaca;box-shadow:2000px 0 7.0px 0 #cacaca"></div><div style="position:absolute;left:-1952px;top:15px;width:58px;height:11px;background:#c2c2c2;box-shadow:2000px 0 7.0px 0 #c2c2c2"></div><div style="position:absolute;left:-1998px;top:29px;width:40px;height:11px;background:#c0c0c0;box-shadow:2000px 0 7.0px 0 #c0c0c0"></div><div style="position:absolute;left:-1958px;top:29px;width:6px;height:11px;background:#cacaca;box-shadow:2000px 0 7.0px 0 #cacaca"></div><div style="position:absolute;left:-1952px;top:29px;width:58px;height:11px;background:#c2c2c2;box-shadow:2000px 0 7.0px 0 #c2c2c2"></div><div style="position:absolute;left:-1998px;top:43px;width:26px;height:11px;background:#c0c0c0;box-shadow:2000px 0 7.0px 0 #c0c0c0"></div><div style="position:absolute;left:-1972px;top:43px;width:4px;height:11px;background:#cacaca;box-shadow:2000px 0 7.0px 0 #cacaca"></div><div style="position:absolute;left:-1968px;top:43px;width:24px;height:11px;background:#c4c4c4;box-shadow:2000px 0 7.0px 0 #c4c4c4"></div><div style="position:absolute;left:-1998px;top:57px;width:40px;height:11px;background:#c0c0c0;box-shadow:2000px 0 7.0px 0 #c0c0c0"></div><div style="position:absolute;left:-1958px;top:57px;width:6px;height:11px;background:#cacaca;box-shadow:2000px 0 7.0px 0 #cacaca"></div><div style="position:absolute;left:-1952px;top:57px;width:58px;height:11px;background:#c2c2c2;box-shadow:2000px 0 7.0px 0 #c2c2c2"></div><div style="position:absolute;left:-1998px;top:71px;width:26px;height:11px;background:#c0c0c0;box-shadow:2000px 0 7.0px 0 #c0c0c0"></div><div style="position:absolute;left:-1972px;top:71px;width:4px;height:11px;background:#cacaca;box-shadow:2000px 0 7.0px 0 #cacaca"></div><div style="position:absolute;left:-1968px;top:71px;width:24px;height:11px;background:#c4c4c4;box-shadow:2000px 0 7.0px 0 #c4c4c4"></div><div style="position:absolute;left:-1998px;top:85px;width:26px;height:11px;background:#c0c0c0;box-shadow:2000px 0 7.0px 0 #c0c0c0"></div><div style="position:absolute;left:-1972px;top:85px;width:4px;height:11px;background:#cacaca;box-shadow:2000px 0 7.0px 0 #cacaca"></div><div style="position:absolute;left:-1968px;top:85px;width:24px;height:11px;background:#c4c4c4;box-shadow:2000px 0 7.0px 0 #c4c4c4"></div><div style="position:absolute;left:-1998px;top:99px;width:40px;height:11px;background:#c0c0c0;box-shadow:2000px 0 7.0px 0 #c0c0c0"></div><div style="position:absolute;left:-1958px;top:99px;width:6px;height:11px;background:#cacaca;box-shadow:2000px 0 7.0px 0 #cacaca"></div><div style="position:absolute;left:-1952px;top:99px;width:58px;height:11px;background:#c2c2c2;box-shadow:2000px 0 7.0px 0 #c2c2c2"></div><div style="position:absolute;left:-1998px;top:113px;width:40px;height:11px;background:#c0c0c0;box-shadow:2000px 0 7.0px 0 #c0c0c0"></div><div style="position:absolute;left:-1958px;top:113px;width:6px;height:11px;background:#cacaca;box-shadow:2000px 0 7.0px 0 #cacaca"></div><div style="position:absolute;left:-1952px;top:113px;width:58px;height:11px;background:#c2c2c2;box-shadow:2000px 0 7.0px 0 #c2c2c2"></div><div style="position:absolute;left:-1998px;top:127px;width:26px;height:11px;background:#c0c0c0;box-shadow:2000px 0 7.0px 0 #c0c0c0"></div><div style="position:absolute;left:-1972px;top:127px;width:4px;height:11px;background:#cacaca;box-shadow:2000px 0 7.0px 0 #cacaca"></div><div style="position:absolute;left:-1968px;top:127px;width:24px;height:11px;background:#c4c4c4;box-shadow:2000px 0 7.0px 0 #c4c4c4"></div><div style="position:absolute;left:-1998px;top:141px;width:40px;height:11px;background:#c0c0c0;box-shadow:2000px 0 7.0px 0 #c0c0c0"></div><div style="position:absolute;left:-1958px;top:141px;width:6px;height:11px;background:#cacaca;box-shadow:2000px 0 7.0px 0 #cacaca"></div><div style="position:absolute;left:-1952px;top:141px;width:58px;height:11px;background:#c2c2c2;box-shadow:2000px 0 7.0px 0 #c2c2c2"></div><div style="position:absolute;left:-1998px;top:155px;width:26px;height:11px;background:#c0c0c0;box-shadow:2000px 0 7.0px 0 #c0c0c0"></div><div style="position:absolute;left:-1972px;top:155px;width:4px;height:11px;background:#cacaca;box-shadow:2000px 0 7.0px 0 #cacaca"></div><div style="position:absolute;left:-1968px;top:155px;width:24px;height:11px;background:#c4c4c4;box-shadow:2000px 0 7.0px 0 #c4c4c4"></div><div style="position:absolute;left:-1998px;top:169px;width:26px;height:11px;background:#c0c0c0;box-shadow:2000px 0 7.0px 0 #c0c0c0"></div><div style="position:absolute;left:-1972px;top:169px;width:4px;height:11px;background:#cacaca;box-shadow:2000px 0 7.0px 0 #cacaca"></div><div style="position:absolute;left:-1968px;top:169px;width:24px;height:11px;background:#c4c4c4;box-shadow:2000px 0 7.0px 0 #c4c4c4"></div><div style="position:absolute;left:-1998px;top:183px;width:40px;height:11px;background:#c0c0c0;box-shadow:2000px 0 7.0px 0 #c0c0c0"></div><div style="position:absolute;left:-1958px;top:183px;width:6px;height:11px;background:#cacaca;box-shadow:2000px 0 7.0px 0 #cacaca"></div><div style="position:absolute;left:-1952px;top:183px;width:58px;height:11px;background:#c2c2c2;box-shadow:2000px 0 7.0px 0 #c2c2c2"></div><div style="position:absolute;left:-1998px;top:197px;width:40px;height:11px;background:#c0c0c0;box-shadow:2000px 0 7.0px 0 #c0c0c0"></div><div style="position:absolute;left:-1958px;top:197px;width:6px;height:11px;background:#cacaca;box-shadow:2000px 0 7.0px 0 #cacaca"></div><div style="position:absolute;left:-1952px;top:197px;width:58px;height:11px;background:#c2c2c2;box-shadow:2000px 0 7.0px 0 #c2c2c2"></div><div style="position:absolute;left:-1998px;top:211px;width:26px;height:11px;background:#c0c0c0;box-shadow:2000px 0 7.0px 0 #c0c0c0"></div><div style="position:absolute;left:-1972px;top:211px;width:4px;height:11px;background:#cacaca;box-shadow:2000px 0 7.0px 0 #cacaca"></div><div style="position:absolute;left:-1968px;top:211px;width:24px;height:11px;background:#c4c4c4;box-shadow:2000px 0 7.0px 0 #c4c4c4"></div><div style="position:absolute;left:-1998px;top:225px;width:40px;height:11px;background:#c0c0c0;box-shadow:2000px 0 7.0px 0 #c0c0c0"></div><div style="position:absolute;left:-1958px;top:225px;width:6px;height:11px;background:#cacaca;box-shadow:2000px 0 7.0px 0 #cacaca"></div><div style="position:absolute;left:-1952px;top:225px;width:58px;height:11px;background:#c2c2c2;box-shadow:2000px 0 7.0px 0 #c2c2c2"></div><div style="position:absolute;left:-1998px;top:239px;width:26px;height:11px;background:#c0c0c0;box-shadow:2000px 0 7.0px 0 #c0c0c0"></div><div style="position:absolute;left:-1972px;top:239px;width:4px;height:11px;background:#cacaca;box-shadow:2000px 0 7.0px 0 #cacaca"></div><div style="position:absolute;left:-1968px;top:239px;width:24px;height:11px;background:#c4c4c4;box-shadow:2000px 0 7.0px 0 #c4c4c4"></div></div>
<div class="a" style="left:429px;top:396px;width:100px;height:13px;overflow:hidden;background:#dddbdd"><div style="position:absolute;left:-1990px;top:2px;width:40px;height:9px;background:#c2c2c2;box-shadow:2000px 0 5.0px 0 #c2c2c2"></div><div style="position:absolute;left:-1948px;top:3px;width:20px;height:7px;background:#cfcfcf;box-shadow:2000px 0 5.0px 0 #cfcfcf"></div><div style="position:absolute;left:-1928px;top:2px;width:26px;height:9px;background:#c4c4c4;box-shadow:2000px 0 5.0px 0 #c4c4c4"></div></div>
<div class="a" style="left:352px;top:448px;width:110px;height:16px;overflow:hidden;background:#d2e2f4"><div style="position:absolute;left:-1996px;top:4px;width:45px;height:8px;background:#b4cdee;box-shadow:2000px 0 5.0px 0 #b4cdee"></div><div style="position:absolute;left:-1942px;top:4px;width:22px;height:8px;background:#bcd4f0;box-shadow:2000px 0 5.0px 0 #bcd4f0"></div><div style="position:absolute;left:-1916px;top:4px;width:24px;height:8px;background:#b4cdee;box-shadow:2000px 0 5.0px 0 #b4cdee"></div></div>
<div class="a" style="left:352px;top:489px;width:174px;height:16px;overflow:hidden;background:#ebe9eb"><div style="position:absolute;left:-1996px;top:4px;width:56px;height:9px;background:#b4b4b4;box-shadow:2000px 0 6px 0 #b4b4b4"></div><div style="position:absolute;left:-1940px;top:4px;width:10px;height:9px;background:#c4c4c4;box-shadow:2000px 0 6px 0 #c4c4c4"></div><div style="position:absolute;left:-1930px;top:4px;width:60px;height:9px;background:#b6b6b6;box-shadow:2000px 0 6px 0 #b6b6b6"></div><div style="position:absolute;left:-1870px;top:4px;width:36px;height:9px;background:#bcbcbc;box-shadow:2000px 0 6px 0 #bcbcbc"></div></div>
<div class="a" style="left:530px;top:489px;width:88px;height:16px;overflow:hidden;background:#ebe9eb"><div style="position:absolute;left:-1995px;top:4px;width:48px;height:9px;background:#b8b8b8;box-shadow:2000px 0 6px 0 #b8b8b8"></div><div style="position:absolute;left:-1947px;top:4px;width:30px;height:9px;background:#bababa;box-shadow:2000px 0 6px 0 #bababa"></div></div>
</body></html>
